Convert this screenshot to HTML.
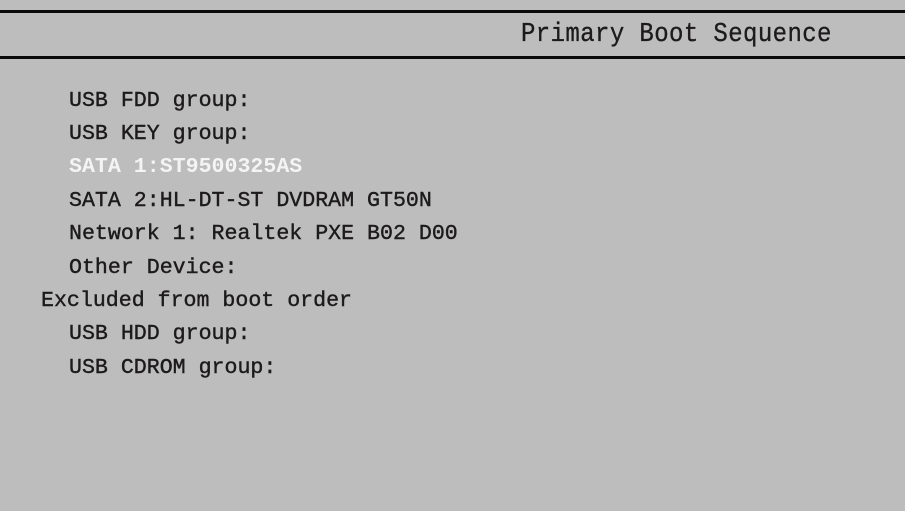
<!DOCTYPE html>
<html><head><meta charset="utf-8"><style>
html,body{margin:0;padding:0}
body{width:905px;height:511px;background:#bdbdbd;position:relative;overflow:hidden;font-family:"Liberation Mono",monospace;color:#1c1a1a}
.l{position:absolute;left:0;width:905px;height:3px;background:#0a0a0a}
.t{position:absolute;white-space:pre;font-size:21.6px;line-height:24px;-webkit-text-stroke:0.4px #1c1a1a}
.h{position:absolute;left:521px;top:21px;font-size:24px;letter-spacing:0.4px;white-space:pre;line-height:26px;transform:scaleY(1.1);transform-origin:0 0;-webkit-text-stroke:0.3px #1c1a1a}
.w{color:#f4f4f4;font-weight:bold;-webkit-text-stroke:0}
</style></head><body>
<div class="l" style="top:10px"></div>
<div class="l" style="top:56px"></div>
<div class="h">Primary Boot Sequence</div>
<div class="t" style="left:69px;top:89px">USB FDD group:</div>
<div class="t" style="left:69px;top:122px">USB KEY group:</div>
<div class="t w" style="left:69px;top:155px">SATA 1:ST9500325AS</div>
<div class="t" style="left:69px;top:189px">SATA 2:HL-DT-ST DVDRAM GT50N</div>
<div class="t" style="left:69px;top:222px">Network 1: Realtek PXE B02 D00</div>
<div class="t" style="left:69px;top:256px">Other Device:</div>
<div class="t" style="left:41px;top:289px">Excluded from boot order</div>
<div class="t" style="left:69px;top:322px">USB HDD group:</div>
<div class="t" style="left:69px;top:356px">USB CDROM group:</div>
</body></html>
